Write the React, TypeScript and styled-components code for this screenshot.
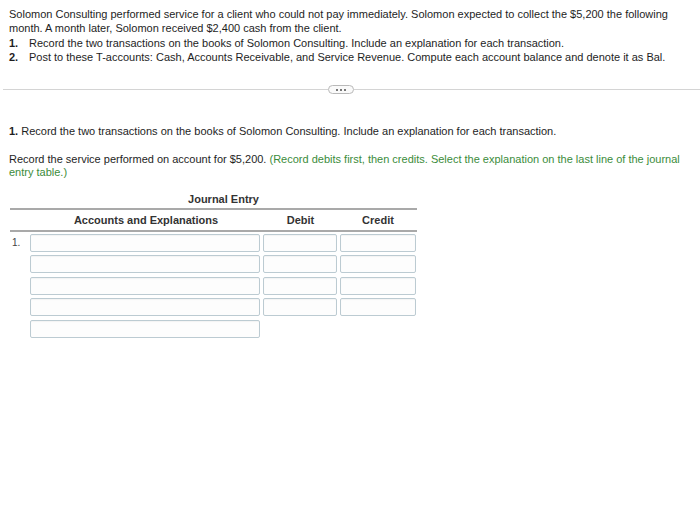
import React from "react";
import styled, { createGlobalStyle } from "styled-components";

const Global = createGlobalStyle`
  html, body { margin: 0; padding: 0; background: #fff; }
  body { font-family: "Liberation Sans", Arial, sans-serif; color: #1e1e1e; }
`;

const Page = styled.div`
  width: 700px;
  height: 505px;
  overflow: hidden;
  padding-top: 7px;
  box-sizing: border-box;
`;

const Intro = styled.div`
  padding: 0 12px 0 9px;
  font-size: 11px;
  line-height: 14.3px;
`;

const P = styled.p`
  margin: 0;
  width: 672px;
`;

const List = styled.ol`
  list-style: none;
  margin: 0;
  padding: 0;
`;

const Item = styled.li`
  display: flex;
`;

const Num = styled.span`
  font-weight: bold;
  width: 20px;
  flex: none;
`;

const Divider = styled.div`
  margin: 21px 0 0 3px;
  display: flex;
  align-items: center;
  height: 9px;
`;

const Rule = styled.div<{ $w?: number }>`
  flex: ${(p) => (p.$w ? `0 0 ${p.$w}px` : "1")};
  height: 1px;
  background: #d4d4d4;
`;

const MoreBtn = styled.div`
  width: 24px;
  height: 7px;
  border: 1px solid #b9b9b9;
  border-radius: 5px;
  display: flex;
  align-items: center;
  justify-content: center;
  gap: 2px;
  background: #fafafa;
`;

const Dot = styled.span`
  width: 2px;
  height: 2px;
  background: #777;
`;

const Section = styled.div`
  padding: 0 9px;
  font-size: 11px;
  line-height: 13.5px;
  margin-top: 31px;
`;

const Bold = styled.b`
  font-weight: bold;
`;

const Instr = styled.p`
  margin: 14px 0 0;
`;

const Green = styled.span`
  color: #3b8c3b;
`;

const Table = styled.div`
  margin: 12px 0 0 1px;
  width: 407px;
`;

const Title = styled.div`
  font-weight: bold;
  font-size: 11px;
  padding-left: 20px;
  text-align: center;
  line-height: 14px;
  padding-bottom: 2px;
  color: #333;
`;

const HeadRow = styled.div`
  border-top: 2px solid #a9a9a9;
  border-bottom: 2px solid #a9a9a9;
  display: grid;
  grid-template-columns: 20px 232px 77px 78px;
  height: 17px;
  padding-top: 3px;
  align-items: center;
  font-weight: bold;
  color: #333;
`;

const HeadCell = styled.div`
  text-align: center;
`;

const Rows = styled.div`
  display: flex;
  flex-direction: column;
  gap: 3.5px;
  padding-top: 2px;
`;

const Row = styled.div`
  display: grid;
  grid-template-columns: 17px 230px 74px 76px;
  column-gap: 3px;
  align-items: center;
`;

const RowNum = styled.div`
  font-size: 10px;
  color: #444;
  padding-left: 2px;
`;

const Input = styled.div`
  height: 18px;
  box-sizing: border-box;
  border: 1px solid #bccbd2;
  border-radius: 2px;
  background: #fdfdfd;
  box-shadow: inset 0 1px 1px rgba(0,0,0,0.04);
`;

export default function App() {
  const rows = [0, 1, 2, 3];
  return (
    <>
      <Global />
      <Page>
        <Intro>
          <P>
            Solomon Consulting performed service for a client who could not pay immediately. Solomon expected to collect the $5,200 the following month. A month later, Solomon received $2,400 cash from the client.
          </P>
          <List>
            <Item><Num>1.</Num><span>Record the two transactions on the books of Solomon Consulting. Include an explanation for each transaction.</span></Item>
            <Item><Num>2.</Num><span>Post to these T-accounts: Cash, Accounts Receivable, and Service Revenue. Compute each account balance and denote it as Bal.</span></Item>
          </List>
        </Intro>
        <Divider>
          <Rule $w={325} />
          <MoreBtn><Dot /><Dot /><Dot /></MoreBtn>
          <Rule />
        </Divider>
        <Section>
          <div><Bold>1.</Bold> Record the two transactions on the books of Solomon Consulting. Include an explanation for each transaction.</div>
          <Instr>
            Record the service performed on account for $5,200. <Green>(Record debits first, then credits. Select the explanation on the last line of the journal</Green>
            <br />
            <Green>entry table.)</Green>
          </Instr>
          <Table>
            <Title>Journal Entry</Title>
            <HeadRow>
              <span />
              <HeadCell>Accounts and Explanations</HeadCell>
              <HeadCell>Debit</HeadCell>
              <HeadCell>Credit</HeadCell>
            </HeadRow>
            <Rows>
              {rows.map((r) => (
                <Row key={r}>
                  <RowNum>{r === 0 ? "1." : ""}</RowNum>
                  <Input />
                  <Input />
                  <Input />
                </Row>
              ))}
              <Row>
                <RowNum />
                <Input />
              </Row>
            </Rows>
          </Table>
        </Section>
      </Page>
    </>
  );
}
